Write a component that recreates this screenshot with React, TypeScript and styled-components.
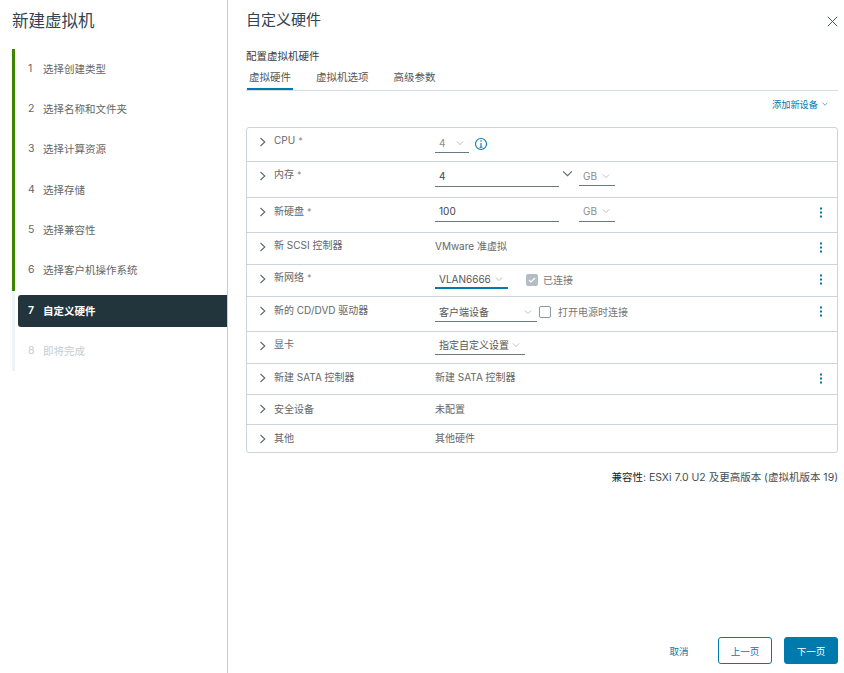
import React from "react";
import styled, { createGlobalStyle } from "styled-components";

const Global = createGlobalStyle`
  html, body { margin: 0; padding: 0; background: #fff; }
  body { font-family: "Inter", "Noto Sans CJK SC", sans-serif; font-size: 10.5px; color: #565656; }
`;

const Page = styled.div`
  display: flex;
  width: 844px;
  height: 673px;
  overflow: hidden;
`;

const Sidebar = styled.aside`
  width: 215px;
  flex: none;
  border-right: 1px solid #ccc;
  padding: 12px 0 0 12px;
`;

const WizardTitle = styled.h1`
  margin: 0 0 18px;
  height: 19px;
  font-size: 16.5px;
  line-height: 19px;
  font-weight: 400;
  color: #314351;
`;

const StepList = styled.ol`
  list-style: none;
  margin: 0;
  padding: 0;
`;

const Step = styled.li<{ $state: "done" | "active" | "todo" }>`
  display: flex;
  align-items: center;
  height: 40.3px;
  box-sizing: border-box;
  padding-left: ${(p) => (p.$state === "active" ? "10px" : "13px")};
  padding-bottom: ${(p) => (p.$state === "active" ? "0" : "2px")};
  border-left: 3px solid ${(p) => (p.$state === "done" ? "#3c8500" : "#edf3f6")};
  color: ${(p) => (p.$state === "todo" ? "#c4cdd2" : "#666")};
  font-size: 10.5px;
  white-space: nowrap;
`;

const ActiveBox = styled.div`
  display: flex;
  align-items: center;
  height: 32px;
  flex: 1;
  margin-left: -7px;
  padding-left: 10px;
  border-radius: 3px 0 0 3px;
  background: #22343c;
  color: #fff;
  font-weight: 600;
`;

const StepNo = styled.span`
  width: 15px;
  flex: none;
`;

const Main = styled.main`
  flex: 1;
  display: flex;
  flex-direction: column;
  padding: 0 6px 9px 18px;
  min-width: 0;
`;

const Head = styled.header`
  display: flex;
  align-items: center;
  justify-content: space-between;
  height: 40px;
`;

const Title = styled.h2`
  margin: 0;
  font-size: 15px;
  line-height: 40px;
  font-weight: 400;
  color: #314351;
`;

const CloseBtn = styled.span`
  display: flex;
  margin: 3px 0 0 0;
`;

const Sub = styled.div`
  margin-top: 9px;
  height: 16px;
  line-height: 16px;
  font-size: 10.5px;
  color: #3a3a3a;
`;

const Tabs = styled.nav`
  display: flex;
  height: 20px;
  margin-top: 5px;
  border-bottom: 1px solid #d7dde0;
`;

const Tab = styled.span<{ $on?: boolean }>`
  box-sizing: border-box;
  height: 20px;
  padding: 0 2px;
  margin-left: ${(p) => (p.$on ? "1px" : "0")};
  margin-right: 21px;
  line-height: 15px;
  color: #565656;
  border-bottom: 2px solid ${(p) => (p.$on ? "#0079ad" : "transparent")};
`;

const AddBar = styled.div`
  display: flex;
  justify-content: flex-end;
  align-items: center;
  gap: 4px;
  height: 26px;
  padding-right: 10px;
  color: #0079ad;
  font-size: 9.2px;
  margin-bottom: 10px;
`;

const Table = styled.section`
  border: 1px solid #ccd5d9;
  border-radius: 3px;
  font-size: 10px;
`;

const Row = styled.div<{ $h: number }>`
  display: grid;
  grid-template-columns: 27px 161px 1fr 34px;
  height: ${(p) => p.$h}px;
  box-sizing: border-box;
  border-bottom: 1px solid #ccd5d9;
  &:last-child { border-bottom: 0; }
`;

const Caret = styled.span`
  display: flex;
  padding: 8px 0 0 11px;
`;

const Label = styled.div<{ $t: number }>`
  padding-top: ${(p) => 5 + p.$t}px;
  line-height: 14px;
  color: #666;
  white-space: nowrap;
  sup { font-size: 9px; vertical-align: baseline; margin-left: 3px; color: #888; }
`;

const Cell = styled.div`
  display: flex;
  align-items: flex-start;
  padding-top: 6px;
  line-height: 14px;
  color: #565656;
`;

const Static = styled.span<{ $t: number }>`
  margin-top: ${(p) => p.$t}px;
  color: #666;
`;

const Select = styled.span<{ $w: number; $h: number; $pt: number; $blue?: boolean; $muted?: boolean; $ml?: number }>`
  display: flex;
  align-items: flex-start;
  justify-content: space-between;
  box-sizing: border-box;
  width: ${(p) => p.$w}px;
  height: ${(p) => p.$h}px;
  margin-left: ${(p) => p.$ml ?? 0}px;
  padding: ${(p) => p.$pt}px 5px 0 4px;
  flex: none;
  white-space: nowrap;
  color: ${(p) => (p.$muted ? "#8c8c8c" : "#565656")};
  border-bottom: ${(p) => (p.$blue ? "2px solid #0079ad" : "1px solid #6a7a82")};
  svg { margin-top: 3px; flex: none; }
`;

const Input = styled.span<{ $w: number; $h: number; $pt: number }>`
  display: block;
  box-sizing: border-box;
  width: ${(p) => p.$w}px;
  height: ${(p) => p.$h}px;
  padding: ${(p) => p.$pt}px 4px 0;
  flex: none;
  color: #444;
  border-bottom: 1px solid #6a7a82;
`;

const Dropper = styled.span`
  display: flex;
  margin-left: 3px;
`;

const Check = styled.span<{ $on?: boolean; $ml: number }>`
  display: flex;
  align-items: center;
  justify-content: center;
  box-sizing: border-box;
  width: 12px;
  height: 12px;
  margin: 3px 0 0 ${(p) => p.$ml}px;
  flex: none;
  border-radius: 2px;
  border: 1px solid ${(p) => (p.$on ? "#b3bec4" : "#8c9aa1")};
  background: ${(p) => (p.$on ? "#b3bec4" : "#fff")};
`;

const CheckText = styled.span<{ $ml: number }>`
  margin: 2px 0 0 ${(p) => p.$ml}px;
  color: #777;
  white-space: nowrap;
`;

const Kebab = styled.span`
  display: flex;
  justify-content: center;
  padding: 9px 0 0 2px;
`;

const Compat = styled.div`
  margin-top: 18px;
  text-align: right;
  line-height: 14px;
  color: #3f4f58;
  b { font-weight: 400; color: #222; }
`;

const Footer = styled.footer`
  margin-top: auto;
  display: flex;
  justify-content: flex-end;
  align-items: center;
  gap: 12px;
`;

const Button = styled.button<{ $kind: "link" | "outline" | "solid" }>`
  box-sizing: border-box;
  width: 54px;
  height: 27px;
  padding: 0;
  border-radius: 3px;
  font: inherit;
  font-size: 9.5px;
  color: ${(p) => (p.$kind === "solid" ? "#fff" : "#0079ad")};
  background: ${(p) => (p.$kind === "solid" ? "#0079ad" : "#fff")};
  border: 1px solid ${(p) => (p.$kind === "link" ? "transparent" : "#0079ad")};
`;

const InfoWrap = styled.span`
  display: flex;
  margin: 3px 0 0 5px;
`;

const Chevron = ({ size = 8, color = "#a6b0b6", w = 1 }: { size?: number; color?: string; w?: number }) => (
  <svg width={size} height={size} viewBox="0 0 10 10" fill="none" stroke={color} strokeWidth={w}>
    <path d="M1 3l4 4 4-4" />
  </svg>
);

const Right = () => (
  <svg width="10" height="12" viewBox="0 0 10 12" fill="none" stroke="#5b6a72" strokeWidth="1.1">
    <path d="M2.5 2L6.8 6 2.5 10" />
  </svg>
);

const Dots = () => (
  <svg width="4" height="11" viewBox="0 0 4 11" fill="#0079ad">
    <rect x="1" y="0.5" width="2" height="2" />
    <rect x="1" y="4.5" width="2" height="2" />
    <rect x="1" y="8.5" width="2" height="2" />
  </svg>
);

const Info = () => (
  <svg width="14" height="14" viewBox="0 0 14 14" fill="none" stroke="#0079ad">
    <circle cx="7" cy="7" r="5.5" strokeWidth="1.1" />
    <path d="M7 6v4M5.5 10.2h3" strokeWidth="1.1" />
    <circle cx="7" cy="4" r=".8" fill="#0079ad" stroke="none" />
  </svg>
);

const Close = () => (
  <svg width="11" height="11" viewBox="0 0 11 11" stroke="#48565e" strokeWidth="1" fill="none">
    <path d="M.8.8l9.4 9.4M10.2.8L.8 10.2" />
  </svg>
);

const Tick = () => (
  <svg width="8" height="8" viewBox="0 0 8 8" fill="none" stroke="#fff" strokeWidth="1.2">
    <path d="M1 4l2 2 4-4" />
  </svg>
);

const steps = ["选择创建类型", "选择名称和文件夹", "选择计算资源", "选择存储", "选择兼容性", "选择客户机操作系统"];

const Item = ({ h, t = 0, name, req, kebab, children }: { h: number; t?: number; name: string; req?: boolean; kebab?: boolean; children: React.ReactNode }) => (
  <Row $h={h}>
    <Caret><Right /></Caret>
    <Label $t={t}>{name}{req && <sup>*</sup>}</Label>
    <Cell>{children}</Cell>
    <Kebab>{kebab && <Dots />}</Kebab>
  </Row>
);

export default function App() {
  return (
    <Page>
      <Global />
      <Sidebar>
        <WizardTitle>新建虚拟机</WizardTitle>
        <StepList>
          {steps.map((s, i) => (
            <Step key={s} $state="done"><StepNo>{i + 1}</StepNo>{s}</Step>
          ))}
          <Step $state="active">
            <ActiveBox><StepNo>7</StepNo>自定义硬件</ActiveBox>
          </Step>
          <Step $state="todo"><StepNo>8</StepNo>即将完成</Step>
        </StepList>
      </Sidebar>
      <Main>
        <Head>
          <Title>自定义硬件</Title>
          <CloseBtn><Close /></CloseBtn>
        </Head>
        <Sub>配置虚拟机硬件</Sub>
        <Tabs>
          <Tab $on>虚拟硬件</Tab>
          <Tab>虚拟机选项</Tab>
          <Tab>高级参数</Tab>
        </Tabs>
        <AddBar>添加新设备<Chevron size={6} color="#0079ad" /></AddBar>
        <Table>
          <Item h={34} name="CPU" req>
            <Select $w={34} $h={19} $pt={2} $muted>4<Chevron /></Select>
            <InfoWrap><Info /></InfoWrap>
          </Item>
          <Item h={36} name="内存" req>
            <Input $w={124} $h={19} $pt={1}>4</Input>
            <Dropper><Chevron size={11} color="#5b6a72" /></Dropper>
            <Select $w={36} $h={18} $pt={1} $ml={6} $muted>GB<Chevron /></Select>
          </Item>
          <Item h={35} t={1} name="新硬盘" req kebab>
            <Input $w={124} $h={18} $pt={0}>100</Input>
            <Select $w={36} $h={18} $pt={0} $ml={20} $muted>GB<Chevron /></Select>
          </Item>
          <Item h={32} name="新 SCSI 控制器" kebab><Static $t={0}>VMware 准虚拟</Static></Item>
          <Item h={32} name="新网络" req kebab>
            <Select $w={73} $h={18} $pt={1} $blue>VLAN6666<Chevron /></Select>
            <Check $on $ml={18}><Tick /></Check>
            <CheckText $ml={5}>已连接</CheckText>
          </Item>
          <Item h={35} t={1} name="新的 CD/DVD 驱动器" kebab>
            <Select $w={102} $h={19} $pt={2}>客户端设备<Chevron /></Select>
            <Check $ml={2} />
            <CheckText $ml={7}>打开电源时连接</CheckText>
          </Item>
          <Item h={32} name="显卡">
            <Select $w={90} $h={17} $pt={0}>指定自定义设置<Chevron /></Select>
          </Item>
          <Item h={31} t={1} name="新建 SATA 控制器" kebab><Static $t={0}>新建 SATA 控制器</Static></Item>
          <Item h={30} t={2} name="安全设备"><Static $t={1}>未配置</Static></Item>
          <Item h={27} t={1} name="其他"><Static $t={0}>其他硬件</Static></Item>
        </Table>
        <Compat><b>兼容性</b>: ESXi 7.0 U2 及更高版本 (虚拟机版本 19)</Compat>
        <Footer>
          <Button $kind="link">取消</Button>
          <Button $kind="outline">上一页</Button>
          <Button $kind="solid">下一页</Button>
        </Footer>
      </Main>
    </Page>
  );
}
